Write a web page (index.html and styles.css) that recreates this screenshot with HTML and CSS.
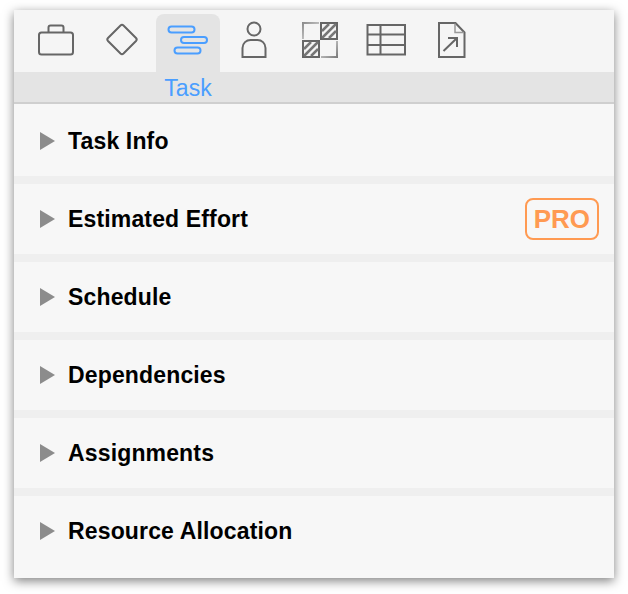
FILE: index.html
```html
<!DOCTYPE html>
<html>
  <head>
    <meta charset="UTF-8" />
    <title>Task Inspector</title>
    <link rel="stylesheet" href="styles.css">
  </head>

  <body>
    <div class="window">
      <div class="toolbar">
        <div class="tab">
          <svg class="icon" viewBox="0 0 64 58">
            <rect x="15" y="18.500" width="34" height="22" rx="2.500" />
            <path d="M24.500 18.500V13.500a2 2 0 0 1 2-2h11a2 2 0 0 1 2 2v5" />
          </svg>
        </div>
        <div class="tab">
          <svg class="icon" viewBox="0 0 64 58">
            <path d="M30.500 11.500a2.200 2.200 0 0 1 3 0l12.500 12.500a2.200 2.200 0 0 1 0 3l-12.500 12.500a2.200 2.200 0 0 1-3 0l-12.500-12.500a2.200 2.200 0 0 1 0-3z" />
          </svg>
        </div>
        <div class="tab active">
          <svg class="icon" viewBox="0 0 64 58">
            <rect x="12.500" y="12.500" width="26" height="6" rx="3" />
            <rect x="25" y="23" width="26" height="6" rx="3" />
            <rect x="18.500" y="33.500" width="26" height="6" rx="3" />
          </svg>
        </div>
        <div class="tab">
          <svg class="icon" viewBox="0 0 64 58">
            <circle cx="32" cy="15" r="6.500" />
            <path d="M20.500 43V34c0-5 4-8 8-8h7c4 0 8 3 8 8v9z" />
          </svg>
        </div>
        <div class="tab">
          <svg class="icon" viewBox="0 0 64 58">
            <defs>
              <linearGradient id="fadeA" gradientUnits="userSpaceOnUse" x1="14" y1="8" x2="32" y2="26">
                <stop offset="0" stop-color="#888" />
                <stop offset="1" stop-color="#f0f0f0" />
              </linearGradient>
              <linearGradient id="fadeB" gradientUnits="userSpaceOnUse" x1="50" y1="44" x2="32" y2="26">
                <stop offset="0" stop-color="#777" />
                <stop offset="1" stop-color="#f0f0f0" />
              </linearGradient>
            </defs>
            <path class="fade-a" d="M31 9H15V25" />
            <path class="fade-b" d="M33 43H49V27" />
            <rect x="33" y="9" width="16" height="16" />
            <path class="hatch" d="M34 17L41 10M34 24L48 10M41 24L48 17" />
            <rect x="15" y="27" width="16" height="16" />
            <path class="hatch" d="M16 35L23 28M16 42L30 28M23 42L30 35" />
          </svg>
        </div>
        <div class="tab">
          <svg class="icon" viewBox="0 0 64 58">
            <rect x="13.500" y="11" width="37.500" height="29.500" />
            <path d="M13.500 20.500H51M13.500 31H51M26.500 11V40.500" />
          </svg>
        </div>
        <div class="tab">
          <svg class="icon" viewBox="0 0 64 58">
            <path d="M19 9H35.500L44.500 18.500V43H19z" />
            <path class="thin" d="M35 9.500V18.500H44" />
            <path d="M23.500 37L37 24M28 24H37V33" />
          </svg>
        </div>
      </div>

      <div class="tab-label"><span>Task</span></div>

      <div class="section first">
        <span class="arrow"></span>
        <span class="title">Task Info</span>
      </div>
      <div class="section">
        <span class="arrow"></span>
        <span class="title">Estimated Effort</span>
        <span class="pro">PRO</span>
      </div>
      <div class="section">
        <span class="arrow"></span>
        <span class="title">Schedule</span>
      </div>
      <div class="section">
        <span class="arrow"></span>
        <span class="title">Dependencies</span>
      </div>
      <div class="section">
        <span class="arrow"></span>
        <span class="title">Assignments</span>
      </div>
      <div class="section last">
        <span class="arrow"></span>
        <span class="title">Resource Allocation</span>
      </div>
    </div>
  </body>
</html>
```

FILE: styles.css
```css
body {
  font-family: "Liberation Sans", Arial, sans-serif;
  margin: 0;
  padding: 0;
  background-color: #fff;
}

.window {
  width: 600px;
  margin: 10px 14px 16px;
  background-color: #f7f7f7;
  box-shadow: 0 3px 10px rgba(0, 0, 0, 0.5);
}

.toolbar {
  display: flex;
  gap: 2px;
  height: 58px;
  padding: 4px 10px 0;
  background-color: #f5f5f5;
}

.tab {
  width: 64px;
  height: 58px;
  border-radius: 8px 8px 0 0;
}

.tab.active {
  background-color: #e4e4e4;
}

.icon {
  display: block;
  width: 64px;
  height: 58px;
  fill: none;
  stroke: #666;
  stroke-width: 2;
}

.active .icon {
  stroke: #4a9eff;
}

.icon .thin {
  stroke-width: 1.500;
  stroke: #999;
}

.icon .hatch {
  stroke: #777;
  stroke-width: 2.500;
}

.icon .fade-a {
  stroke: url(#fadeA);
}

.icon .fade-b {
  stroke: url(#fadeB);
}

.tab-label {
  height: 30px;
  padding-left: 142px;
  border-bottom: 2px solid #cfcfcf;
  background-color: #e4e4e4;
  color: #4a9eff;
  font-size: 23px;
  line-height: 33px;
}

.tab-label span {
  display: block;
  width: 64px;
  text-align: center;
}

.section {
  display: flex;
  align-items: center;
  height: 70px;
  padding: 0 15px 0 26px;
  border-bottom: 8px solid #efefef;
}

.section.first {
  padding-top: 2px;
}

.section.last {
  padding-bottom: 12px;
  border-bottom: none;
}

.arrow {
  width: 0;
  height: 0;
  margin-right: 13px;
  border-top: 9px solid transparent;
  border-bottom: 9px solid transparent;
  border-left: 15px solid #8c8c8c;
}

.title {
  color: #000;
  font-size: 23px;
  font-weight: bold;
  letter-spacing: 0.15px;
}

.pro {
  margin-left: auto;
  padding: 0 7px;
  border: 2px solid #ff9a52;
  border-radius: 8px;
  color: #ff9a52;
  font-size: 26px;
  font-weight: bold;
  line-height: 38px;
}
```
